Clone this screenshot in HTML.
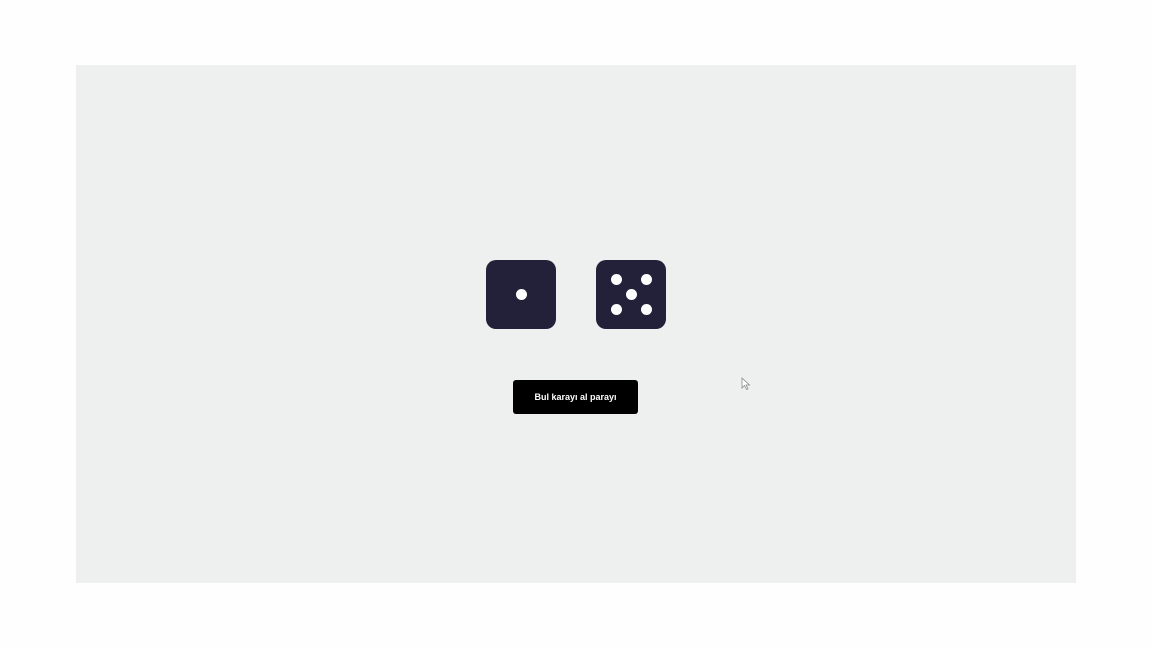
<!DOCTYPE html>
<html><head><meta charset="utf-8"><style>
html,body{margin:0;padding:0;width:1152px;height:648px;background:#fefefe;overflow:hidden}
.panel{position:absolute;left:76px;top:65px;width:1000px;height:518px;background:#eeefef}
.die{position:absolute;top:260px;width:70px;height:69px;background:#23213a;border-radius:10px}
.dot{position:absolute;width:11px;height:11px;border-radius:50%;background:#fff}
.btn{position:absolute;left:513px;top:380px;width:125px;height:34px;background:#000;border-radius:3px;color:#fff;font:bold 9px "Liberation Sans",sans-serif;display:flex;align-items:center;justify-content:center}
</style></head><body>
<div class="panel"></div>
<div class="die" style="left:486px"><div class="dot" style="left:29.5px;top:29px"></div></div>
<div class="die" style="left:596px">
<div class="dot" style="left:14.5px;top:14px"></div>
<div class="dot" style="left:44.5px;top:14px"></div>
<div class="dot" style="left:29.5px;top:29px"></div>
<div class="dot" style="left:14.5px;top:44px"></div>
<div class="dot" style="left:44.5px;top:44px"></div>
</div>
<div class="btn">Bul karayı al parayı</div>
<svg style="position:absolute;left:741px;top:377px" width="10" height="14" viewBox="0 0 10 14"><path d="M1 1 L1 11 L3.5 8.5 L5.5 12.5 L7 11.8 L5 8 L8.5 8 Z" fill="#fff" stroke="#888" stroke-width="0.8"/></svg>
</body></html>
